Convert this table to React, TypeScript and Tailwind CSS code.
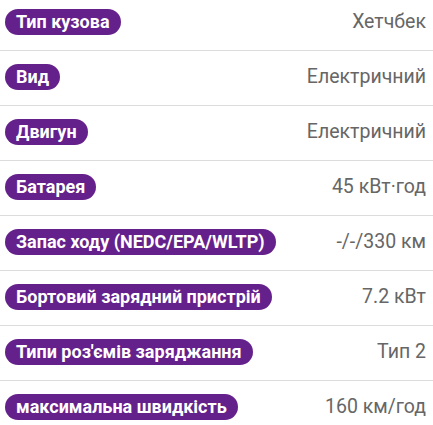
import React from "react";

const rows: [string, string][] = [
  ["Тип кузова", "Хетчбек"],
  ["Вид", "Електричний"],
  ["Двигун", "Електричний"],
  ["Батарея", "45 кВт·год"],
  ["Запас ходу (NEDC/EPA/WLTP)", "-/-/330 км"],
  ["Бортовий зарядний пристрій", "7.2 кВт"],
  ["Типи роз'ємів заряджання", "Тип 2"],
  ["максимальна швидкість", "160 км/год"],
];

export default function App() {
  return (
    <div
      className="w-[433px] h-[425px] overflow-hidden bg-white"
      style={{ fontFamily: "Roboto, 'Noto Sans', sans-serif" }}
    >
      {rows.map(([k, v], i) => (
        <div
          key={i}
          className={`flex items-center justify-between pl-[5px] pr-[7px] border-b border-[#dcdcdc] ${
            i === 0 ? "pt-[9px] pb-[15px]" : "pt-[13px] pb-[15px]"
          }`}
        >
          <span className="h-[26px] flex items-center rounded-full bg-[#65218b] px-[11px] text-white font-bold text-[18px] leading-none">
            {k}
          </span>
          <span className="text-[#666666] text-[19.5px] leading-none">{v}</span>
        </div>
      ))}
    </div>
  );
}
